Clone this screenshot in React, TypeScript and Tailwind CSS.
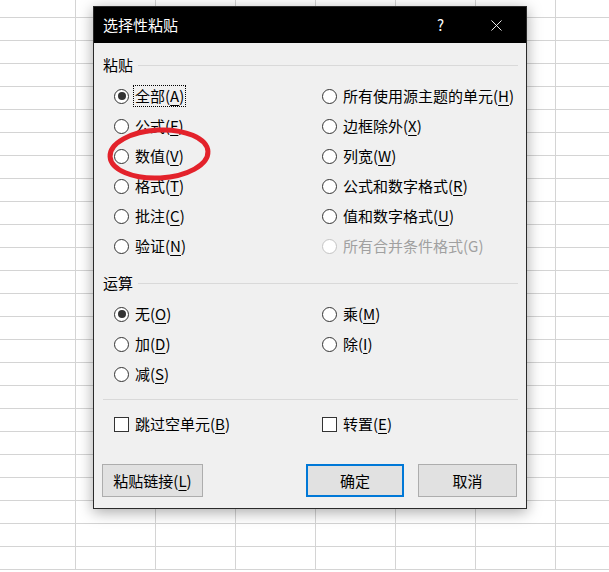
import type { ReactNode } from "react";

type Opt = { text: string; key: string; checked?: boolean; disabled?: boolean; focused?: boolean };

const pasteLeft: Opt[] = [
  { text: "全部", key: "A", checked: true, focused: true },
  { text: "公式", key: "F" },
  { text: "数值", key: "V" },
  { text: "格式", key: "T" },
  { text: "批注", key: "C" },
  { text: "验证", key: "N" },
];

const pasteRight: Opt[] = [
  { text: "所有使用源主题的单元", key: "H" },
  { text: "边框除外", key: "X" },
  { text: "列宽", key: "W" },
  { text: "公式和数字格式", key: "R" },
  { text: "值和数字格式", key: "U" },
  { text: "所有合并条件格式", key: "G", disabled: true },
];

const opLeft: Opt[] = [
  { text: "无", key: "O", checked: true },
  { text: "加", key: "D" },
  { text: "减", key: "S" },
];

const opRight: Opt[] = [
  { text: "乘", key: "M" },
  { text: "除", key: "I" },
];

function Label({ text, k, disabled }: { text: string; k: string; disabled?: boolean }) {
  return (
    <>
      {text}(
      {disabled ? k : <span className="underline underline-offset-[3px] decoration-1">{k}</span>})
    </>
  );
}

function Radio({ opt }: { opt: Opt }) {
  return (
    <div className="flex h-[30px] items-center gap-[4px]">
      <span
        className={`flex h-[15px] w-[15px] items-center justify-center rounded-full border bg-white ${
          opt.disabled ? "border-[#c4c4c4]" : "border-[#333333]"
        }`}
      >
        {opt.checked && <span className="h-[8px] w-[8px] rounded-full bg-[#333333]" />}
      </span>
      <span
        className={`flex h-[22px] items-center border px-px text-[15px] leading-[20px] ${
          opt.focused ? "border-dotted border-black" : "border-transparent"
        } ${opt.disabled ? "text-[#a0a0a0]" : "text-black"}`}
      >
        <Label text={opt.text} k={opt.key} disabled={opt.disabled} />
      </span>
    </div>
  );
}

function Check({ text, k }: { text: string; k: string }) {
  return (
    <div className="flex h-[30px] items-center gap-[4px]">
      <span className="h-[15px] w-[15px] border border-[#333333] bg-white" />
      <span className="flex h-[22px] items-center border border-transparent px-px text-[15px] leading-[20px] text-black">
        <Label text={text} k={k} />
      </span>
    </div>
  );
}

function SectionTitle({ children }: { children: ReactNode }) {
  return (
    <div className="flex h-[20px] items-center gap-[5px]">
      <span className="text-[15px] leading-[20px] text-black">{children}</span>
      <div className="h-px flex-1 bg-[#d9d9d9]" />
    </div>
  );
}

function Column({ items }: { items: Opt[] }) {
  return (
    <div className="flex flex-col">
      {items.map((o) => (
        <Radio key={o.key} opt={o} />
      ))}
    </div>
  );
}

export default function App() {
  return (
    <div className="relative h-[572px] w-[609px] overflow-hidden bg-white font-['Noto_Sans_CJK_SC','Noto_Sans',sans-serif]">
      {/* spreadsheet behind the dialog */}
      <div className="grid grid-cols-[76px_repeat(7,80px)] grid-rows-[18px_repeat(24,23px)]">
        {Array.from({ length: 200 }).map((_, i) => (
          <div key={i} className="border-b border-r border-[#d4d4d4]" />
        ))}
      </div>

      <div className="absolute left-[93px] top-[6px] w-[434px] border border-[#2a2a2a] bg-[#f0f0f0] shadow-[0_3px_14px_rgba(0,0,0,0.35)]">
        <div className="flex h-[36px] items-center bg-black pl-[9px] text-white">
          <span className="text-[15px] leading-[20px]">选择性粘贴</span>
          <span className="ml-auto mr-[47px] text-[15px] leading-[20px]">?</span>
          <svg viewBox="0 0 12 12" className="mr-[24px] h-[11px] w-[11px]" stroke="white" strokeWidth={1}>
            <line x1="0.5" y1="0.5" x2="11.5" y2="11.5" />
            <line x1="11.5" y1="0.5" x2="0.5" y2="11.5" />
          </svg>
        </div>

        <div className="flex flex-col pb-[11px] pl-[9px] pr-[8px] pt-[12px]">
          <SectionTitle>粘贴</SectionTitle>
          <div className="mt-[6px] grid grid-cols-[208px_1fr] pl-[11px]">
            <Column items={pasteLeft} />
            <Column items={pasteRight} />
          </div>

          <div className="mt-[12px]">
            <SectionTitle>运算</SectionTitle>
          </div>
          <div className="mt-[6px] grid grid-cols-[208px_1fr] pl-[11px]">
            <Column items={opLeft} />
            <Column items={opRight} />
          </div>

          <div className="mt-[10px] h-px bg-[#d9d9d9]" />

          <div className="mt-[9px] grid grid-cols-[208px_1fr] pl-[11px]">
            <Check text="跳过空单元" k="B" />
            <Check text="转置" k="E" />
          </div>

          <div className="mt-[25px] flex items-center">
            <button className="-ml-px h-[33px] w-[101px] border border-[#adadad] bg-[#e1e1e1] text-[15px] leading-[20px] text-black">
              粘贴链接(<span className="underline underline-offset-[3px] decoration-1">L</span>)
            </button>
            <div className="ml-auto mr-px flex gap-[14px]">
              <button className="h-[33px] w-[98px] border-2 border-[#0078d7] bg-[#e1e1e1] text-[15px] leading-[20px] text-black">
                确定
              </button>
              <button className="h-[33px] w-[99px] border border-[#adadad] bg-[#e1e1e1] text-[15px] leading-[20px] text-black">
                取消
              </button>
            </div>
          </div>
        </div>
      </div>

      {/* red annotation circle */}
      <svg className="pointer-events-none absolute left-0 top-0 h-[572px] w-[609px]" viewBox="0 0 609 572">
        <ellipse
          cx="159"
          cy="154"
          rx="49"
          ry="24"
          fill="none"
          stroke="#e3222b"
          strokeWidth="5"
          transform="rotate(-3 159 154)"
        />
      </svg>
    </div>
  );
}
